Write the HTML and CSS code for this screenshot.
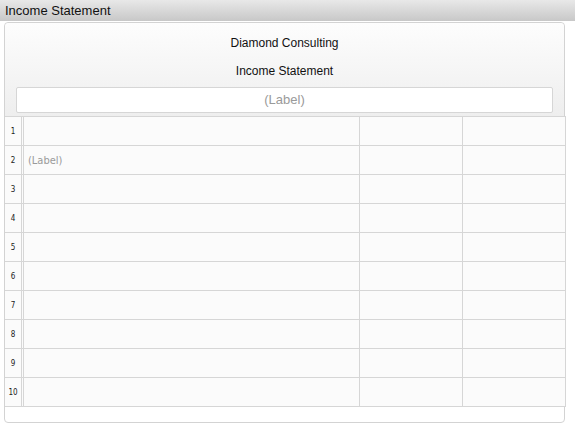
FILE: index.html
```html
<!DOCTYPE html>
<html>
<head>
<meta charset="utf-8">
<link rel="stylesheet" href="styles.css">
</head>
<body>
<div class="titlebar">Income Statement</div>
<div class="panel">
  <div class="header">
    <div class="hline">Diamond Consulting</div>
    <div class="hline">Income Statement</div>
    <div class="label-box">(Label)</div>
  </div>
  <div class="grid">
    <div class="row"><div class="num">1</div><div class="cell c1"></div><div class="cell c2"></div><div class="cell c3"></div></div>
    <div class="row"><div class="num">2</div><div class="cell c1"><span class="ph">(Label)</span></div><div class="cell c2"></div><div class="cell c3"></div></div>
    <div class="row"><div class="num">3</div><div class="cell c1"></div><div class="cell c2"></div><div class="cell c3"></div></div>
    <div class="row"><div class="num">4</div><div class="cell c1"></div><div class="cell c2"></div><div class="cell c3"></div></div>
    <div class="row"><div class="num">5</div><div class="cell c1"></div><div class="cell c2"></div><div class="cell c3"></div></div>
    <div class="row"><div class="num">6</div><div class="cell c1"></div><div class="cell c2"></div><div class="cell c3"></div></div>
    <div class="row"><div class="num">7</div><div class="cell c1"></div><div class="cell c2"></div><div class="cell c3"></div></div>
    <div class="row"><div class="num">8</div><div class="cell c1"></div><div class="cell c2"></div><div class="cell c3"></div></div>
    <div class="row"><div class="num">9</div><div class="cell c1"></div><div class="cell c2"></div><div class="cell c3"></div></div>
    <div class="row"><div class="num">10</div><div class="cell c1"></div><div class="cell c2"></div><div class="cell c3"></div></div>
  </div>
</div>
</body>
</html>
```
FILE: styles.css
```css
html, body {
  margin: 0;
  padding: 0;
  background: #ffffff;
  font-family: "Liberation Sans", Arial, sans-serif;
}
.titlebar {
  height: 21px;
  line-height: 21px;
  padding-left: 5px;
  font-size: 13px;
  color: #111;
  background: linear-gradient(#e8e8e8, #c8c8c8);
}
.panel {
  box-sizing: border-box;
  width: 561px;
  height: 401px;
  margin: 1px 0 0 4px;
  border: 1px solid #d3d3d3;
  border-radius: 4px;
  background: #ffffff;
}
.header {
  padding-top: 6px;
  padding-bottom: 3px;
  background: linear-gradient(#fdfdfd, #eeeeee);
  border-radius: 4px 4px 0 0;
}
.hline {
  height: 28px;
  line-height: 28px;
  text-align: center;
  font-size: 12px;
  color: #111;
}
.label-box {
  box-sizing: border-box;
  height: 26px;
  margin: 2px 11px 0 11px;
  border: 1px solid #d6d6d6;
  border-radius: 2px;
  background: #fff;
  text-align: center;
  line-height: 24px;
  font-size: 13px;
  color: #9a9a9a;
}
.grid {
  margin-right: -2px;
  border-top: 1px solid #d6d6d6;
  border-right: 1px solid #d6d6d6;
  background: #fbfbfb;
}
.row {
  display: flex;
  height: 28px;
  border-bottom: 1px solid #d6d6d6;
}
.num {
  box-sizing: border-box;
  width: 17px;
  border-right: 1px solid #d6d6d6;
  font-family: "DejaVu Sans Condensed", sans-serif;
  font-size: 8px;
  color: #222;
  display: flex;
  align-items: center;
  justify-content: center;
}
.cell {
  box-sizing: border-box;
  border-left: 1px solid #d6d6d6;
  display: flex;
  align-items: center;
}
.c1 {
  width: 336px;
  margin-left: 1px;
}
.c2 {
  width: 103px;
}
.c3 {
  width: 102px;
}
.ph {
  padding-left: 4px;
  font-family: "DejaVu Sans Condensed", sans-serif;
  font-size: 11px;
  color: #9a9a9a;
}
```
